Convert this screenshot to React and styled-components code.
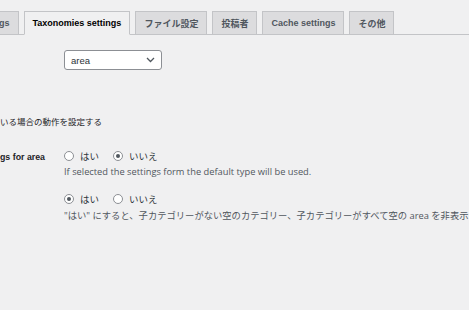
import React from "react";
import styled, { createGlobalStyle } from "styled-components";

const GlobalStyle = createGlobalStyle`
  html, body {
    margin: 0;
    padding: 0;
    background: #f0f0f1;
    overflow: hidden;
  }
  body {
    font-family: "Liberation Sans", "Noto Sans CJK JP", sans-serif;
    color: #1d2327;
    font-size: 9.5px;
  }
`;

const Page = styled.div`
  width: 469px;
  height: 310px;
  overflow: hidden;
  padding-top: 11px;
  box-sizing: border-box;
`;

const TabBar = styled.nav`
  display: flex;
  align-items: flex-end;
  gap: 5px;
  border-bottom: 1px solid #c3c4c7;
  height: 23px;
  white-space: nowrap;
`;

const Tab = styled.a`
  display: flex;
  align-items: center;
  height: 22px;
  padding: 0 8px;
  font-weight: 600;
  font-size: 9px;
  color: ${(p) => (p.$active ? "#000" : "#50575e")};
  background: ${(p) => (p.$active ? "#f0f0f1" : "#dcdcde")};
  border: 1px solid #c3c4c7;
  border-bottom: ${(p) => (p.$active ? "1px solid #f0f0f1" : "none")};
  margin-bottom: ${(p) => (p.$active ? "-1px" : "0")};
  text-decoration: none;
`;

const Form = styled.div`
  display: grid;
  grid-template-columns: 64px 1fr;
  white-space: nowrap;
`;

const Th = styled.div`
  font-weight: 600;
  font-size: 8.8px;
  padding-top: ${(p) => p.$top || 0}px;
`;

const Td = styled.div`
  padding-top: ${(p) => p.$top || 0}px;
`;

const SelectBox = styled.div`
  width: 98px;
  height: 20px;
  box-sizing: border-box;
  background: #fff;
  border: 1px solid #8c8f94;
  border-radius: 3px;
  display: flex;
  align-items: center;
  justify-content: space-between;
  padding: 0 6px;
  font-size: 9.5px;
  color: #2c3338;
`;

const Section = styled.p`
  grid-column: 1 / -1;
  margin: 0;
  padding-top: 45px;
  font-size: 8.5px;
  color: #1d2327;
`;

const RadioRow = styled.div`
  display: flex;
  align-items: center;
  height: 12px;
`;

const RadioLabel = styled.label`
  display: flex;
  align-items: center;
  gap: 6px;
  margin-right: 14px;
  font-size: 9.5px;
  color: #2c3338;
`;

const Radio = styled.span`
  width: 10px;
  height: 10px;
  box-sizing: border-box;
  border: 1px solid #8c8f94;
  border-radius: 50%;
  background: #fff;
  display: flex;
  align-items: center;
  justify-content: center;
  &::after {
    content: "";
    width: 4px;
    height: 4px;
    border-radius: 50%;
    background: ${(p) => (p.$checked ? "#50575e" : "transparent")};
  }
`;

const Description = styled.p`
  margin: 3px 0 0;
  font-family: "Open Sans", "Noto Sans CJK JP", sans-serif;
  font-size: 9.3px;
  color: #50575e;
`;

const Chevron = () => (
  <svg width="9" height="6" viewBox="0 0 9 6">
    <path d="M1 1l3.5 3.5L8 1" fill="none" stroke="#50575e" strokeWidth="1.3" />
  </svg>
);

const RadioGroup = ({ value }) => (
  <RadioRow>
    <RadioLabel>
      <Radio $checked={value === "yes"} />
      はい
    </RadioLabel>
    <RadioLabel>
      <Radio $checked={value === "no"} />
      いいえ
    </RadioLabel>
  </RadioRow>
);

export default function App() {
  return (
    <Page>
      <GlobalStyle />
      <TabBar>
        <Tab style={{ marginLeft: -10 }}>gs</Tab>
        <Tab $active>Taxonomies settings</Tab>
        <Tab>ファイル設定</Tab>
        <Tab>投稿者</Tab>
        <Tab>Cache settings</Tab>
        <Tab>その他</Tab>
      </TabBar>
      <Form>
        <Th />
        <Td $top={15}>
          <SelectBox>
            area
            <Chevron />
          </SelectBox>
        </Td>
        <Section>いる場合の動作を設定する</Section>
        <Th $top={25}>gs for area</Th>
        <Td $top={23}>
          <RadioGroup value="no" />
          <Description>If selected the settings form the default type will be used.</Description>
        </Td>
        <Th />
        <Td $top={15}>
          <RadioGroup value="yes" />
          <Description>
            "はい" にすると、子カテゴリーがない空のカテゴリー、子カテゴリーがすべて空の area を非表示にします。
          </Description>
        </Td>
      </Form>
    </Page>
  );
}
